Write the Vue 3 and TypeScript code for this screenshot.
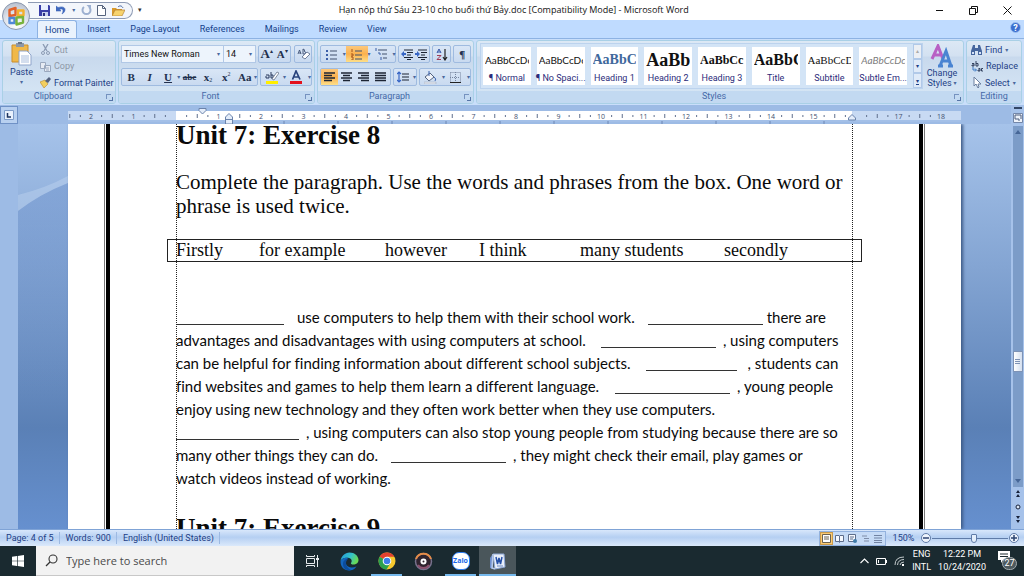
<script setup lang="ts">
import { ref } from 'vue'

interface Segment {
  text?: string
  blank?: number
  before?: number
}

interface StyleSample {
  label: string
  sample: string
  kind: string
}

const fontName = ref('Times New Roman')
const fontSize = ref('14')
const zoom = ref(50)
const search = ref('')

const tabs = ['Insert', 'Page Layout', 'References', 'Mailings', 'Review', 'View']

const styleSamples: StyleSample[] = [
  { label: '¶ Normal', sample: 'AaBbCcDc', kind: 'sans' },
  { label: '¶ No Spaci...', sample: 'AaBbCcDc', kind: 'sans' },
  { label: 'Heading 1', sample: 'AaBbCc', kind: 'h1' },
  { label: 'Heading 2', sample: 'AaBb', kind: 'h2' },
  { label: 'Heading 3', sample: 'AaBbCc', kind: 'h3' },
  { label: 'Title', sample: 'AaBbC', kind: 'title' },
  { label: 'Subtitle', sample: 'AaBbCcD', kind: 'sub' },
  { label: 'Subtle Em...', sample: 'AaBbCcDc', kind: 'subtle' },
]

const phrases = ['Firstly', 'for example', 'however', 'I think', 'many students', 'secondly']

const lines: Segment[][] = [
  [{ blank: 108 }, { text: 'use computers to help them with their school work.', before: 13 }, { blank: 115, before: 13 }, { text: 'there are', before: 4 }],
  [{ text: 'advantages and disadvantages with using computers at school.' }, { blank: 115, before: 15 }, { text: ', using computers', before: 7 }],
  [{ text: 'can be helpful for finding information about different school subjects.' }, { blank: 91, before: 15 }, { text: ', students can', before: 11 }],
  [{ text: 'find websites and games to help them learn a different language.' }, { blank: 115, before: 16 }, { text: ', young people', before: 7 }],
  [{ text: 'enjoy using new technology and they often work better when they use computers.' }],
  [{ blank: 123 }, { text: ', using computers can also stop young people from studying because there are so', before: 7 }],
  [{ text: 'many other things they can do.' }, { blank: 115, before: 13 }, { text: ', they might check their email, play games or', before: 7 }],
  [{ text: 'watch videos instead of working.' }],
]

const unit = 42.5
const origin = 108
const numbers = Array.from({ length: 21 }, (_, i) => i - 2)
  .filter((n) => n !== 0 && n !== 16)
  .map((n) => ({ x: origin + n * unit, label: Math.abs(n) }))
const quarters = Array.from({ length: 83 }, (_, i) => i - 10).filter((q) => q % 4 !== 0 && q < 76)
const tabStops = Array.from({ length: 11 }, (_, i) => origin + (i + 2) * 54)
</script>

<template>
  <div class="screen">
    <header class="titlebar">
      <div class="quick">
        <button class="ic" aria-label="Save"><svg width="11" height="11" viewBox="0 0 11 11"><path d="M0 0h10l1 1v10H0z" fill="#3b3fa8" /><path d="M2 0h7v5H2z" fill="#e8efff" /><path d="M3 7h6v4H3z" fill="#c7d0ef" /><path d="M4 8h2v3H4z" fill="#2b2f80" /></svg></button>
        <button class="ic" aria-label="Undo"><svg width="11" height="11" viewBox="0 0 11 11"><path d="M0 1v5h5L3.500 4.500C6 3 8.500 4.500 6 9c5-3 4-9-4-6.500z" fill="#3f68bd" stroke="#3f68bd" stroke-width=".6" /></svg></button>
        <span class="arr">▾</span>
        <button class="ic" aria-label="Repeat"><svg width="11" height="11" viewBox="0 0 11 11"><path d="M3 2a4 4 0 1 0 5 0" fill="none" stroke="#9db0d0" stroke-width="2" /><path d="M5.500 0H10v4.500z" fill="#9db0d0" /></svg></button>
        <button class="ic" aria-label="New"><svg width="9" height="11" viewBox="0 0 9 11"><path d="M.5.5h5l3 3v7h-8z" fill="#fff" stroke="#55637d" /><path d="M5.500.5v3h3" fill="none" stroke="#55637d" /></svg></button>
        <button class="ic" aria-label="Open"><svg width="13" height="11" viewBox="0 0 13 11"><path d="M0 3h4l1 1h5v6H0z" fill="#d99a2e" /><path d="M3 5h10l-3 6H0z" fill="#f7d36d" stroke="#a8742a" stroke-width=".6" /><path d="M6 2c2-2 4-1 5 1" fill="none" stroke="#4463a0" /></svg></button>
      </div>
      <span class="more">▾</span>
      <h1>Hạn nộp thứ Sáu 23-10 cho buổi thứ Bảy.doc [Compatibility Mode] - Microsoft Word</h1>
      <div class="winbtns">
        <button aria-label="Minimize"><svg width="9" height="9" viewBox="0 0 9 9"><path d="M1 4.500h7" stroke="#111" /></svg></button>
        <button aria-label="Restore"><svg width="9" height="9" viewBox="0 0 9 9"><path d="M.5 2.500h6v6h-6zM2.500 2.500v-2h6v6h-2" fill="none" stroke="#111" /></svg></button>
        <button aria-label="Close"><svg width="9" height="9" viewBox="0 0 9 9"><path d="M.5.5l8 8M8.500.5l-8 8" stroke="#111" /></svg></button>
      </div>
    </header>
    <button class="office" aria-label="Office Button">
      <svg width="30" height="30" viewBox="0 0 30 30">
        <defs><radialGradient id="orb" cx=".5" cy=".85" r=".9"><stop offset="0" stop-color="#fff" /><stop offset=".5" stop-color="#dfe4ec" /><stop offset="1" stop-color="#b4bccb" /></radialGradient></defs>
        <circle cx="15" cy="15" r="13.500" fill="url(#orb)" stroke="#8a97ae" />
        <g fill="none" stroke-width="2.400" stroke-linejoin="round"><path d="M8.500 9l6-2v7l-6 1z" stroke="#e2622a" /><path d="M17 9.500h5.500v5H17z" stroke="#f4b02c" /><path d="M8.500 17h5v5h-5z" stroke="#4f88d6" /><path d="M15.500 16.500l6.500-.5v5.500l-6.500 2z" stroke="#78b33c" /></g>
      </svg>
    </button>
    <nav class="tabs">
      <button class="tab active">Home</button>
      <button v-for="t in tabs" :key="t" class="tab">{{ t }}</button>
      <button class="help" aria-label="Help">?</button>
    </nav>

    <section class="ribbon">
      <div class="group clipboard">
        <div class="body">
          <button class="big paste">
            <svg width="22" height="24" viewBox="0 0 22 24"><path d="M1 3h16v17H1z" fill="#f0b849" stroke="#c98d2c" /><path d="M5 1h8v4H5z" fill="#8d98a8" /><path d="M7 0h4v2H7z" fill="#687386" /><path d="M8 9h8l4 4v10H8z" fill="#fff" stroke="#8fa5cb" /><path d="M10 14h8M10 16h8M10 18h8M10 20h8" stroke="#a9bedd" /></svg>
            <span>Paste</span><span class="arr">▾</span>
          </button>
          <div class="stack">
            <button class="item off"><svg width="11" height="11" viewBox="0 0 11 11"><path d="M3 0l4 7M8 0L4 7" stroke="#8b9bb3" stroke-width="1.300" /><circle cx="3" cy="9" r="1.500" fill="none" stroke="#8b9bb3" /><circle cx="8" cy="9" r="1.500" fill="none" stroke="#8b9bb3" /></svg>Cut</button>
            <button class="item off"><svg width="11" height="11" viewBox="0 0 11 11"><path d="M.5 1.500h5v6h-5zM4.500 4.500h6v6h-6z" fill="#e6ebf3" stroke="#9aa8be" /><path d="M6 7h3M6 9h3" stroke="#9aa8be" /></svg>Copy</button>
            <button class="item"><svg width="11" height="11" viewBox="0 0 11 11"><path d="M0 5l5-2 3 4-4 4z" fill="#f3cf5f" stroke="#b88a2e" stroke-width=".6" /><path d="M5 4l4-4 2 2-3 4z" fill="#53617e" /></svg>Format Painter</button>
          </div>
        </div>
        <footer>Clipboard<i class="launch"></i></footer>
      </div>

      <div class="group font">
        <div class="body rows">
          <div class="row">
            <label class="combo name"><select v-model="fontName" aria-label="Font"><option>Times New Roman</option></select><span class="arr">▾</span></label>
            <label class="combo size"><select v-model="fontSize" aria-label="Font Size"><option>14</option></select><span class="arr">▾</span></label>
            <div class="tb w33"><button class="serif big11"><b>A</b><sup>▴</sup></button><button class="serif"><b>A</b><sup>▾</sup></button></div>
            <div class="tb w18 push"><button aria-label="Clear Formatting"><svg width="13" height="12" viewBox="0 0 13 12"><path d="M1 6l1.500-4L4 6M2 5h2M6 1v5h2q2-2-1-3 2-1-1-2" fill="none" stroke="#3c4f73" stroke-width=".9" /><path d="M5 9l5-5 3 2-5 5z" fill="#fff" stroke="#6f7f9c" /></svg></button></div>
          </div>
          <div class="row">
            <div class="tb fill">
              <button class="serif"><b>B</b></button><button class="serif"><b><i>I</i></b></button><button class="serif"><b><u>U</u></b></button><span class="arr">▾</span>
              <button class="serif s9"><b><s>abe</s></b></button><button class="serif"><b>x</b><sub>2</sub></button><button class="serif"><b>x</b><sup>2</sup></button><button class="serif"><b>Aa</b></button><span class="arr">▾</span>
            </div>
            <div class="tb w52 push">
              <button aria-label="Text Highlight Color"><svg width="14" height="14" viewBox="0 0 14 14"><path d="M1 5h3v3H1V6M6 2v6h2V5H6" fill="none" stroke="#29395c" /><path d="M7 9l5-7 2 1-5 7z" fill="#fff" stroke="#56647e" stroke-width=".7" /><path d="M1 11h12v3H1z" fill="#ffee00" /></svg></button><span class="arr">▾</span>
              <button aria-label="Font Color"><svg width="13" height="14" viewBox="0 0 13 14"><path d="M2.500 9.500L6 1l4 8.500M4 7h4.500" fill="none" stroke="#29437c" stroke-width="1.700" /><path d="M0 11h12v3H0z" fill="#e3111c" /></svg></button><span class="arr">▾</span>
            </div>
          </div>
        </div>
        <footer>Font<i class="launch"></i></footer>
      </div>

      <div class="group para">
        <div class="body rows">
          <div class="row">
            <div class="tb w78">
              <button aria-label="Bullets"><svg width="12" height="11" viewBox="0 0 12 11"><path d="M0 1h2v2H0zM0 5h2v2H0zM0 9h2v2H0z" fill="#3b5ea8" /><path d="M4 2h7M4 6h7M4 10h7" stroke="#41506c" /></svg></button><span class="arr">▾</span>
              <button class="on" aria-label="Numbering"><svg width="12" height="11" viewBox="0 0 12 11"><path d="M1 0v3M0 5h2v2H0M0 8h2v3H0" fill="none" stroke="#a8541c" /><path d="M4 2h7M4 6h7M4 10h7" stroke="#41506c" /></svg></button><span class="arr">▾</span>
              <button aria-label="Multilevel List"><svg width="13" height="12" viewBox="0 0 13 12"><path d="M1 0v3M3 5h2v2M6 9v3" fill="none" stroke="#3b5ea8" /><path d="M3 2h9M7 6h5M8 10h4" stroke="#41506c" stroke-width="1.200" /></svg></button><span class="arr">▾</span>
            </div>
            <div class="tb w32">
              <button aria-label="Decrease Indent"><svg width="12" height="11" viewBox="0 0 12 11"><path d="M3 1h9M6 3.500h6M6 6h4M3 8.500h9M6 10.500h4" stroke="#1c2433" stroke-width="1.200" /><path d="M0 5l3-3v2h2v2H3v2z" fill="#3766c5" /></svg></button>
              <button aria-label="Increase Indent"><svg width="12" height="11" viewBox="0 0 12 11"><path d="M3 1h9M6 3.500h6M6 6h4M3 8.500h9M6 10.500h4" stroke="#1c2433" stroke-width="1.200" /><path d="M5 5L2 2v2H0v2h2v2z" fill="#3766c5" /></svg></button>
            </div>
            <div class="tb w20"><button aria-label="Sort"><svg width="12" height="13" viewBox="0 0 12 13"><path d="M1 5l2-4 2 4M1.500 4h3" fill="none" stroke="#3353a6" /><path d="M1 7.500h4l-4 4h4" fill="none" stroke="#a23a55" /><path d="M9 1v10M7 9l2 3 2-3" fill="none" stroke="#222" stroke-width="1.200" /></svg></button></div>
            <div class="tb w18"><button class="serif"><b>¶</b></button></div>
          </div>
          <div class="row">
            <div class="tb w71">
              <button class="on" aria-label="Align Left"><svg width="12" height="10" viewBox="0 0 12 10"><path d="M0 1h11M0 3.500h8M0 6h11M0 8.500h8" stroke="#1c2433" stroke-width="1.400" /></svg></button>
              <button aria-label="Center"><svg width="12" height="10" viewBox="0 0 12 10"><path d="M0 1h11M2 3.500h7M0 6h11M2 8.500h7" stroke="#1c2433" stroke-width="1.400" /></svg></button>
              <button aria-label="Align Right"><svg width="12" height="10" viewBox="0 0 12 10"><path d="M0 1h11M3 3.500h8M0 6h11M3 8.500h8" stroke="#1c2433" stroke-width="1.400" /></svg></button>
              <button aria-label="Justify"><svg width="12" height="10" viewBox="0 0 12 10"><path d="M0 1h11M0 3.500h11M0 6h11M0 8.500h11" stroke="#1c2433" stroke-width="1.400" /></svg></button>
            </div>
            <div class="tb w24"><button aria-label="Line Spacing"><svg width="12" height="12" viewBox="0 0 12 12"><path d="M2 1v10M0 3l2-2 2 2M0 9l2 2 2-2" fill="none" stroke="#3766c5" stroke-width="1.200" /><path d="M5 3h7M5 6h7M5 9h7" stroke="#1c2433" stroke-width="1.200" /></svg></button><span class="arr">▾</span></div>
            <div class="tb w52">
              <button aria-label="Shading"><svg width="13" height="13" viewBox="0 0 13 13"><path d="M1 6l5-4 4 4-5 4z" fill="#f2f5fb" stroke="#54647f" /><path d="M5 0v5M10 6q3 2 1 4" fill="none" stroke="#3d65b0" /><path d="M0 11h12v2H0z" fill="#e4e8ef" stroke="#9aa6bb" stroke-width=".5" /></svg></button><span class="arr">▾</span>
              <button aria-label="Borders"><svg width="11" height="11" viewBox="0 0 11 11"><path d="M.5.5h10v10M.5.5v10M5.500 0v10M0 5.500h10" fill="none" stroke="#76859f" stroke-dasharray="1 1" /><path d="M0 10.500h11" stroke="#222" /></svg></button><span class="arr">▾</span>
            </div>
          </div>
        </div>
        <footer>Paragraph<i class="launch"></i></footer>
      </div>

      <div class="group styles">
        <div class="body">
          <div class="gallery">
            <button v-for="s in styleSamples" :key="s.label" class="sample">
              <span class="pv" :class="s.kind">{{ s.sample }}</span>
              <span class="lb">{{ s.label }}</span>
            </button>
            <div class="gscroll"><button class="dim" aria-label="Up">▴</button><button aria-label="Down">▾</button><button aria-label="More"><u>▾</u></button></div>
          </div>
          <button class="big change">
            <svg width="24" height="24" viewBox="0 0 24 24"><path d="M2 15L8 2l5 13M4 11h7" fill="none" stroke="#b860c4" stroke-width="3" /><path d="M10 22l6-15 5 15M12 17h8M8 22h5M18 22h5" fill="none" stroke="#4a84d2" stroke-width="3" /></svg>
            <span>Change</span><span class="with-arrow">Styles <i class="arr">▾</i></span>
          </button>
        </div>
        <footer>Styles<i class="launch"></i></footer>
      </div>

      <div class="group editing">
        <div class="body">
          <div class="stack">
            <button class="item"><svg width="11" height="10" viewBox="0 0 11 10"><path d="M2 0h2v3h3V0h2l2 6v4H7V6H4v4H0V6z" fill="#46669e" /><path d="M1 7h2v2H1zM8 7h2v2H8z" fill="#d5e3f8" /></svg>Find <span class="arr">▾</span></button>
            <button class="item"><svg width="12" height="11" viewBox="0 0 12 11"><path d="M1 2.500h2V5H1V4h2M5 0v5h2V2.500H5M7.500 7.500h1.500V10H7V9h2M12 7.500h-1.500V10H12" fill="none" stroke="#33415e" /><path d="M2 6v3h3M4 7.500L5.500 9 4 10.500" fill="none" stroke="#3b78c2" /></svg>Replace</button>
            <button class="item"><svg width="11" height="11" viewBox="0 0 11 11"><path d="M3 0v9l2-2 2 4 1-1-1-3h3z" fill="#fff" stroke="#6a7f9f" /></svg>Select <span class="arr">▾</span></button>
          </div>
        </div>
        <footer>Editing</footer>
      </div>
    </section>

    <div class="work">
      <div class="left">
        <button class="tabsel" aria-label="Tab selector"><svg width="10" height="10" viewBox="0 0 10 10"><path d="M.5.5h9v9h-9z" fill="#e9f1fd" stroke="#7d9cc9" /><path d="M3.500 3v4H7" fill="none" stroke="#1d3460" stroke-width="1.500" /></svg></button>
      </div>
      <div class="center">
        <div class="rulerrow">
          <svg class="ruler" width="893" height="20" viewBox="0 0 893 20">
            <path d="M0 6h893v9H0z" fill="#c8daf3" />
            <path d="M108 6h676v9H108z" fill="#fff" />
            <path d="M0 16h893" stroke="#a9c4ea" />
            <text v-for="n in numbers" :key="n.x" :x="n.x" y="14" text-anchor="middle">{{ n.label }}</text>
            <template v-for="q in quarters" :key="q">
              <path :d="q % 2 === 0 ? `M${origin + (q * unit) / 4} 9v4` : `M${origin + (q * unit) / 4} 10v2`" stroke="#5f6f8c" />
            </template>
            <path v-for="t in tabStops" :key="t" :d="`M${t} 16v3`" stroke="#6c86b3" />
            <path d="M131 3.500h7v2l-3.500 3.500L131 5.500z" fill="#e4edfa" stroke="#6b83ab" />
            <path d="M157.500 19v-7l3.500-3.500 3.500 3.500v7zM157.500 14.500h7" fill="#e4edfa" stroke="#6b83ab" />
            <path d="M780.500 15v-2l3.500-3.500 3.500 3.500v2z" fill="#e4edfa" stroke="#6b83ab" />
          </svg>
        </div>
        <main class="desk">
          <svg class="swoosh" width="50" height="240" viewBox="0 0 50 240">
            <defs><linearGradient id="fade" x1="0" x2="0" y1="0" y2="1"><stop offset="0" stop-color="#5f86c6" stop-opacity=".35" /><stop offset="1" stop-color="#5f86c6" stop-opacity="0" /></linearGradient></defs>
            <path d="M0 21Q28 14 50 2V9Q22 20 0 37z" fill="#d3e3f7" opacity=".3" />
            <path d="M0 37Q22 20 50 9V240H0z" fill="url(#fade)" />
          </svg>
          <article class="page">
            <div class="frame">
              <div class="text">
                <h2>Unit 7: Exercise 8</h2>
                <p class="intro">Complete the paragraph. Use the words and phrases from the box. One word or phrase is used twice.</p>
                <ul class="box"><li v-for="p in phrases" :key="p">{{ p }}</li></ul>
                <div class="cloze">
                  <p v-for="(line, i) in lines" :key="i">
                    <span v-for="(seg, j) in line" :key="j" :class="{ blank: seg.blank }" :style="{ width: seg.blank ? seg.blank + 'px' : undefined, marginLeft: (seg.before ?? 0) + 'px' }">{{ seg.text }}</span>
                  </p>
                </div>
                <h2 class="next">Unit 7: Exercise 9</h2>
              </div>
            </div>
          </article>
        </main>
      </div>
      <aside class="scroll">
        <i class="split"></i>
        <button class="rt" aria-label="View Ruler"><svg width="10" height="10" viewBox="0 0 10 10"><path d="M.5.5h9v9h-9z" fill="#eef3fb" stroke="#7386a8" /><path d="M2 2h6v4M2 2v4h4v2" fill="none" stroke="#4c5c7c" /></svg></button>
        <div class="track">
          <button aria-label="Scroll up"><svg width="6" height="4" viewBox="0 0 6 4"><path d="M3 0l3 4H0z" fill="#466697" /></svg></button>
          <i class="thumb"></i>
          <button aria-label="Scroll down"><svg width="6" height="4" viewBox="0 0 6 4"><path d="M0 0h6L3 4z" fill="#466697" /></svg></button>
        </div>
        <button class="nav" aria-label="Previous Page"><svg width="6" height="8" viewBox="0 0 6 8"><path d="M3 0l2 3H1zM3 4l2 3H1z" fill="#16213a" /></svg></button>
        <button class="nav" aria-label="Browse Object"><svg width="6" height="6" viewBox="0 0 6 6"><circle cx="3" cy="3" r="2" fill="#dbe6f6" stroke="#16213a" /></svg></button>
        <button class="nav" aria-label="Next Page"><svg width="6" height="8" viewBox="0 0 6 8"><path d="M1 0h4L3 3zM1 4h4L3 7z" fill="#16213a" /></svg></button>
      </aside>
    </div>

    <div class="status">
      <span>Page: 4 of 5</span><span>Words: 900</span><span>English (United States)</span>
      <div class="views">
        <button class="on" aria-label="Print Layout"><svg width="9" height="9" viewBox="0 0 9 9"><path d="M.5.5h8v8h-8zM2 3h5M2 5h5" fill="#fff" stroke="#6b6250" /></svg></button>
        <button aria-label="Full Screen Reading"><svg width="9" height="9" viewBox="0 0 9 9"><path d="M.5 1.500h3.500l.5 1 .5-1h3.500v6H5l-.5 1-.5-1H.5zM4.500 2v6" fill="#f6f9fe" stroke="#5d6d8b" /></svg></button>
        <button aria-label="Web Layout"><svg width="9" height="9" viewBox="0 0 9 9"><path d="M.5.5h7v7h-7zM2 3h4M2 5h3" fill="#f6f9fe" stroke="#5d6d8b" /><circle cx="7" cy="7" r="2" fill="#3f7aa8" /></svg></button>
        <button aria-label="Outline"><svg width="9" height="9" viewBox="0 0 9 9"><path d="M1 2h5M3 4.500h5M3 7h5" stroke="#7e8da8" /></svg></button>
        <button aria-label="Draft"><svg width="9" height="9" viewBox="0 0 9 9"><path d="M0 1.500h8M0 4h8M0 6.500h8M0 8.500h8" stroke="#7183a3" /></svg></button>
      </div>
      <button class="pct">150%</button>
      <button class="round" aria-label="Zoom Out"><svg width="8" height="8" viewBox="0 0 8 8"><path d="M1 4h6" stroke="#2c4370" stroke-width="1.500" /></svg></button>
      <input v-model="zoom" type="range" min="0" max="90" aria-label="Zoom" />
      <button class="round" aria-label="Zoom In"><svg width="8" height="8" viewBox="0 0 8 8"><path d="M1 4h6M4 1v6" stroke="#2c4370" stroke-width="1.500" /></svg></button>
    </div>

    <footer class="taskbar">
      <button class="start" aria-label="Start"><svg width="12" height="12" viewBox="0 0 12 12"><path d="M0 1.700l5-.7v4.700H0zM5.700.9L12 0v5.700H5.700zM0 6.300h5V11l-5-.7zM5.700 6.300H12V12l-6.300-.9z" fill="#fff" /></svg></button>
      <label class="find"><svg width="13" height="13" viewBox="0 0 13 13"><circle cx="8" cy="5" r="4" fill="none" stroke="#333" stroke-width="1.100" /><path d="M5 8l-4 4" stroke="#333" stroke-width="1.200" /></svg><input v-model="search" type="text" placeholder="Type here to search" aria-label="Search" /></label>
      <button class="app" aria-label="Task View"><svg width="13" height="12" viewBox="0 0 13 12"><path d="M.5 0v1.500h8V0M.5 3.500h8v5h-8zM.5 12v-1.500h8V12M11.500 0v12" fill="none" stroke="#e8ecee" /><path d="M10 3h3v2h-3z" fill="#e8ecee" /></svg></button>
      <button class="app" aria-label="Edge">
        <svg width="19" height="19" viewBox="0 0 19 19"><defs><linearGradient id="eg" x1="0" x2="1" y1="0" y2=".4"><stop offset="0" stop-color="#2295dc" /><stop offset=".6" stop-color="#35c3c8" /><stop offset="1" stop-color="#68d957" /></linearGradient></defs><path d="M0.500 9.500C1 4 5 .5 9.500.5c5 0 9 3.500 9 7.500 0 3-2.500 4.500-5 4.500-2 0-3-.7-2.500-1.500 1.500-2 .5-4.500-2-5C5 5.300 1 7 .5 9.500z" fill="url(#eg)" /><path d="M.5 9.500C1 7 5 5.300 8.500 6c-2.500 1-3.500 3.500-2.500 6 1.200 3 5 4.500 10.500 2.500-2 3-5 4-7.500 4C4 18.500.3 14.500.5 9.500z" fill="#1466bd" /><path d="M8 7c-3 2-3 8 3 11-5 1-8-2-8-6 0-3 2-5 5-5z" fill="#0c4c9c" /></svg>
      </button>
      <button class="app open" aria-label="Chrome">
        <svg width="18" height="18" viewBox="0 0 18 18"><circle cx="9" cy="9" r="8.500" fill="#f7c92e" /><path d="M9 9L1.600 4.800A8.500 8.500 0 0 1 16.400 4.800H9z" fill="#e2402f" /><path d="M9 9L1.600 4.800A8.500 8.500 0 0 0 8.500 17.500L12.500 11z" fill="#2ca14e" /><circle cx="9" cy="9" r="4.300" fill="#fff" /><circle cx="9" cy="9" r="3.300" fill="#3d7ee8" /></svg>
      </button>
      <button class="app" aria-label="Music">
        <svg width="19" height="19" viewBox="0 0 19 19"><circle cx="9.500" cy="9.500" r="8" fill="#30242f" stroke="#77718c" stroke-width="1.500" /><path d="M2 7A8 8 0 0 1 17 7" fill="none" stroke="#e58c48" stroke-width="2" /><path d="M4 13A6.500 6.500 0 0 0 15 13" fill="none" stroke="#8d5270" stroke-width="2" /><circle cx="9.500" cy="9.500" r="3" fill="#fff" /><circle cx="9.500" cy="9.500" r="1" fill="#30242f" /></svg>
      </button>
      <button class="app open" aria-label="Zalo"><span class="zalo">Zalo</span></button>
      <button class="app open current" aria-label="Word">
        <svg width="17" height="17" viewBox="0 0 17 17"><path d="M4 1h11l1 13-10 2z" fill="#e9effa" stroke="#8ea8d6" /><path d="M3 2L1 5v10l3 1z" fill="#6f8fce" /><path d="M4 1L3 15l3 1" fill="none" stroke="#b9cbea" stroke-width="1.500" /><path d="M7 4l1.500 7L10 5l1.500 6L13 4" fill="none" stroke="#2550a8" stroke-width="1.500" /><path d="M8 13h6" stroke="#6785c0" /></svg>
      </button>
      <div class="tray">
        <svg width="9" height="6" viewBox="0 0 9 6"><path d="M.5 5l4-4 4 4" fill="none" stroke="#fff" stroke-width="1.100" /></svg>
        <svg width="11" height="7" viewBox="0 0 11 7"><path d="M.5.5h9v6h-9z" fill="none" stroke="#fff" /><path d="M2 2h1v3H2zM10 2h1v3h-1z" fill="#fff" /></svg>
        <svg width="11" height="10" viewBox="0 0 11 10"><path d="M1 9Q1 1 10 1M3.500 9Q4 3.500 10 3.500M6 9Q6.500 6 10 6" fill="none" stroke="#c3cacc" /><path d="M8 8h2v2H8z" fill="#fff" /></svg>
        <div class="two"><span>ENG</span><span>INTL</span></div>
        <div class="two clock"><span>12:22 PM</span><span>10/24/2020</span></div>
        <button class="note" aria-label="Notifications"><svg width="12" height="13" viewBox="0 0 12 13"><path d="M0 0h12v9H5l-2 3V9H0z" fill="#fff" /><path d="M2 3h8M2 5.500h8" stroke="#1b2a30" /></svg><span>27</span></button>
      </div>
    </footer>
  </div>
</template>

<style>
html,
body {
  margin: 0;
  overflow: hidden;
}
</style>

<style scoped>
* {
  box-sizing: border-box;
}
.screen {
  height: 100vh;
  display: flex;
  flex-direction: column;
  position: relative;
  overflow: hidden;
  font: 9px/12px Roboto, 'Open Sans', sans-serif;
  color: #1e3f86;
}
button,
input,
select {
  font: inherit;
  color: inherit;
  background: none;
  border: 0;
  padding: 0;
  margin: 0;
  white-space: nowrap;
}
button {
  display: flex;
  align-items: center;
  justify-content: center;
}
svg {
  flex: none;
  display: block;
}
h1,
h2,
p,
ul {
  margin: 0;
  padding: 0;
  font-weight: normal;
}
.arr {
  font: 6px/8px 'DejaVu Sans', sans-serif;
  color: #4b689c;
}
.titlebar {
  height: 20px;
  flex: none;
  background: #fff;
  display: flex;
  align-items: center;
  padding-left: 28px;
}
.quick {
  width: 105px;
  height: 17px;
  border: 1px solid #8e9bb4;
  border-left: 0;
  border-radius: 0 9px 9px 0;
  background: #f3f6fb;
  display: flex;
  align-items: center;
  justify-content: space-between;
  padding: 0 7px 0 11px;
}
.more {
  margin-left: 5px;
  font: 7px/9px 'DejaVu Sans', sans-serif;
  color: #333;
}
h1 {
  flex: 1;
  text-align: center;
  font: 9px/20px 'Open Sans', 'Noto Sans', sans-serif;
  color: #111;
  padding-right: 36px;
  white-space: nowrap;
}
.winbtns {
  display: flex;
  width: 102px;
}
.winbtns button {
  flex: 1;
}
.office {
  position: absolute;
  left: 1px;
  top: 1px;
}
.tabs {
  height: 18px;
  flex: none;
  background: #bfdbff;
  display: flex;
  align-items: stretch;
  padding: 0 3px 0 37px;
}
.tab {
  padding: 0 10px;
  color: #15428b;
}
.tab.active {
  background: #e9f2fd;
  border: 1px solid #8db2e3;
  border-bottom: 0;
  border-radius: 3px 3px 0 0;
  padding: 0 7px;
}
.help {
  margin: 2px 0 0 auto;
  width: 11px;
  height: 11px;
  border-radius: 50%;
  background: #3b6fd0;
  border: 1px solid #9fc0ef;
  color: #fff;
  font-weight: bold;
}
.ribbon {
  height: 67px;
  flex: none;
  display: flex;
  gap: 2px;
  padding: 1px 2px;
  background: #c9defa;
  border-top: 1px solid #8db2e3;
}
.group {
  border: 1px solid #a9d0e6;
  border-radius: 3px;
  background: linear-gradient(#dce8f5 0, #d3e1f1 15px, #c8d9ed 16px, #d8e8f6 100%);
  display: flex;
  flex-direction: column;
  min-width: 0;
  overflow: hidden;
  flex: none;
}
.group .body {
  flex: 1;
  display: flex;
  min-height: 0;
}
.group footer {
  height: 12px;
  line-height: 11px;
  background: #c2d9f1;
  text-align: center;
  color: #4569a8;
  position: relative;
  padding-right: 12px;
}
.group.editing footer {
  padding-right: 0;
}
.launch {
  position: absolute;
  right: 4px;
  top: 3px;
  width: 5px;
  height: 5px;
  border-left: 1px solid #7592bf;
  border-top: 1px solid #7592bf;
}
.launch::after {
  content: '';
  position: absolute;
  left: 2px;
  top: 2px;
  width: 3px;
  height: 3px;
  border-right: 1px solid #5675a8;
  border-bottom: 1px solid #5675a8;
}
.clipboard {
  width: 114px;
}
.font {
  width: 197px;
}
.para {
  width: 157px;
}
.group.styles {
  flex: 1;
}
.editing {
  width: 56px;
}
.big {
  flex-direction: column;
  line-height: 10px;
}
.paste {
  width: 37px;
  justify-content: flex-start;
  padding-top: 1px;
}
.paste span {
  margin-top: 1px;
}
.stack {
  display: flex;
  flex-direction: column;
  justify-content: space-evenly;
  align-items: flex-start;
}
.stack .item {
  height: 16px;
  gap: 3px;
}
.off {
  color: #8d97a6;
}
.rows {
  flex-direction: column;
  padding: 4px 2px 0;
  gap: 5px;
}
.row {
  display: flex;
  gap: 2px;
  height: 18px;
}
.combo {
  display: flex;
  align-items: center;
  background: #edf4fc;
  border: 1px solid #b1c8e6;
  color: #111;
  padding: 0 3px 0 2px;
  justify-content: space-between;
}
.combo select {
  appearance: none;
  flex: 1;
  min-width: 0;
}
.name {
  width: 103px;
}
.size {
  width: 33px;
  margin-left: -3px;
}
.tb {
  display: flex;
  align-items: center;
  border: 1px solid #9fbbe0;
  border-radius: 2px;
  background: linear-gradient(#d9e6f6, #c9daf0);
}
.tb button {
  flex: 1;
  height: 100%;
  color: #22304d;
}
.tb .on {
  background: linear-gradient(#fcc87c, #fbb14d 50%, #fddf8a);
}
.push {
  margin-left: auto;
}
.w18 {
  width: 18px;
}
.w20 {
  width: 20px;
}
.w24 {
  width: 24px;
}
.w32 {
  width: 32px;
}
.w33 {
  width: 33px;
}
.w52 {
  width: 52px;
}
.w71 {
  width: 71px;
}
.w78 {
  width: 78px;
}
.fill {
  width: 137px;
}
.serif {
  font: 11px/14px 'Liberation Serif', serif;
}
.serif.s9 {
  font-size: 9px;
}
.serif sup,
.serif sub {
  font-size: 6px;
  line-height: 6px;
}
.serif sup {
  align-self: flex-start;
  margin-top: 2px;
}
.serif sub {
  align-self: flex-end;
  margin-bottom: 2px;
}
.big11 {
  font-size: 13px;
}
.styles .body {
  padding: 2px 2px 2px 3px;
}
.gallery {
  flex: 1;
  min-width: 0;
  display: flex;
  gap: 6px;
  padding: 3px 0 3px 2px;
  background: #d3e4f6;
  border: 1px solid #bcd3ee;
}
.sample {
  flex: 1;
  min-width: 0;
  background: #fff;
  flex-direction: column;
  justify-content: flex-end;
  padding: 0 2px;
}
.pv {
  width: 100%;
  height: 22px;
  line-height: 22px;
  overflow: hidden;
  text-align: left;
  color: #111;
}
.lb {
  line-height: 14px;
  color: #2b2b7a;
}
.sans {
  font: 10px/22px Lato, sans-serif;
}
.h1,
.h2,
.h3,
.title,
.sub {
  font-family: 'Liberation Serif', serif;
}
.h1 {
  font-size: 14px;
  font-weight: bold;
  color: #3f689c;
}
.h2 {
  font-size: 18px;
  font-weight: bold;
}
.h3 {
  font-size: 12px;
  font-weight: bold;
}
.title {
  font-size: 16px;
  font-weight: bold;
}
.sub {
  font-size: 11px;
}
.subtle {
  font: italic 10px/22px Lato, sans-serif;
  color: #7d7d7d;
}
.gscroll {
  width: 9px;
  margin: -3px 0;
  display: flex;
  flex-direction: column;
}
.gscroll button {
  flex: 1;
  font-size: 6px;
  line-height: 8px;
  border: 1px solid #b1c9e8;
  background: #dfeaf8;
}
.gscroll .dim {
  color: #aaa;
  background: #eceff4;
}
.change {
  width: 38px;
}
.with-arrow {
  display: flex;
  align-items: center;
  gap: 2px;
}
.with-arrow .arr {
  font-style: normal;
}
.editing .stack {
  padding-left: 4px;
}
.work {
  flex: 1;
  min-height: 0;
  display: flex;
  background: #9dbbe5;
}
.left {
  width: 18px;
  flex: none;
}
.tabsel {
  width: 18px;
  height: 18px;
  margin-top: 1px;
  border: 1px solid #6f91c6;
  background: #b8d0f0;
}
.center {
  flex: 1;
  min-width: 0;
  display: flex;
  flex-direction: column;
}
.rulerrow {
  height: 19px;
  flex: none;
  display: flex;
  justify-content: center;
  overflow: hidden;
}
.ruler text {
  font: 7px 'Open Sans', sans-serif;
  fill: #41506f;
}
.desk {
  flex: 1;
  min-height: 0;
  overflow: hidden;
  position: relative;
  display: flex;
  justify-content: center;
  background: linear-gradient(#a6c3ea, #84a5d3 35%, #5a80b6 75%, #6690cf 100%);
}
.swoosh {
  position: absolute;
  left: 0;
  top: 50px;
}
.page {
  width: 893px;
  max-width: 100%;
  background: #fff;
  position: relative;
  box-shadow: 2px 0 3px #3d5a86;
  padding: 0 36px;
}
.frame {
  height: 100%;
  border: solid #777;
  border-width: 0 1px;
  padding: 0 1px;
}
.text {
  display: flow-root;
  height: 100%;
  border: solid #000;
  border-width: 0 4px;
  padding: 0 66px;
  position: relative;
  color: #0a0a0a;
}
.text::before {
  content: '';
  position: absolute;
  left: 66px;
  right: 66px;
  top: 0;
  bottom: 0;
  border: dotted #222;
  border-width: 0 1px;
}
h2 {
  font: bold 27px/30px 'Liberation Serif', serif;
  margin-top: -4px;
}
.intro {
  font: 21px/24px 'Liberation Serif', serif;
  margin-top: 20px;
}
.box {
  list-style: none;
  margin: 21px -9px 0;
  border: 1px solid #222;
  padding: 0 8px;
  font: 18px/21px 'Liberation Serif', serif;
  display: grid;
  grid-template-columns: 83px 126px 94px 101px 144px auto;
  white-space: nowrap;
}
.cloze {
  margin-top: 44px;
  font: 15px/23px Lato, sans-serif;
  font-variant-ligatures: none;
}
.cloze p {
  display: flex;
  white-space: nowrap;
}
.blank {
  flex: none;
  height: 19px;
  border-bottom: 1px solid #333;
}
.next {
  margin-top: 23px;
}
.scroll {
  width: 13px;
  flex: none;
  display: flex;
  flex-direction: column;
  align-items: center;
  background: #a6c2ea;
  padding-bottom: 3px;
}
.split {
  width: 8px;
  height: 2px;
  background: #324666;
  margin: 2px 0 3px;
}
.rt {
  height: 11px;
}
.track {
  width: 10px;
  margin-top: 3px;
  flex: 1;
  display: flex;
  flex-direction: column;
  background: #7c9cc8;
}
.track button {
  height: 12px;
}
.thumb {
  margin-top: 213px;
  margin-bottom: auto;
  height: 21px;
  border: 1px solid #7d92b5;
  border-radius: 1px;
  background: linear-gradient(#7d92b5 1px, transparent 1px 2px, #7d92b5 2px 3px, transparent 3px 4px, #7d92b5 4px) center / 5px 5px no-repeat, linear-gradient(90deg, #fff, #d4dfef);
}
.nav {
  height: 13px;
}
.status {
  height: 17px;
  flex: none;
  display: flex;
  align-items: center;
  border-top: 1px solid #7fa3d6;
  background: linear-gradient(#d8e7fb, #b5cff2 45%, #dbe9fb);
  padding: 0 5px 0 0;
}
.status > span {
  padding: 0 5px 0 6px;
  border-right: 1px solid #9cb9e2;
}
.views {
  margin-left: auto;
  display: flex;
  border: 1px solid #93b2de;
  background: #c6dbf6;
}
.views button {
  width: 13px;
  height: 13px;
}
.views .on {
  background: #fbcb73;
  border: 1px solid #c99a4b;
}
.pct {
  width: 35px;
}
.round {
  width: 10px;
  height: 10px;
  border: 1px solid #5f7ba8;
  border-radius: 50%;
  background: #eef4fd;
}
.status input {
  appearance: none;
  width: 76px;
  height: 10px;
  margin: 0 1px;
  background: linear-gradient(#5f7ba8, #5f7ba8) center / 100% 1px no-repeat;
}
.status input::-webkit-slider-thumb {
  appearance: none;
  width: 6px;
  height: 9px;
  background: #e4eefb;
  border: 1px solid #5f7ba8;
  border-radius: 1px 1px 3px 3px;
}
.taskbar {
  height: 30px;
  flex: none;
  background: #1a2a30;
  display: flex;
  align-items: stretch;
  color: #fff;
}
.start {
  width: 36px;
}
.find {
  width: 258px;
  background: #f2f2f2;
  display: flex;
  align-items: center;
  gap: 8px;
  padding-left: 9px;
  border-bottom: 1px solid #c8c8c8;
}
.find input {
  flex: 1;
  min-width: 0;
  font: 11px/14px 'Open Sans', sans-serif;
  color: #333;
  outline: 0;
}
.find input::placeholder {
  color: #4a4a4a;
  opacity: 1;
}
.app {
  width: 37px;
  position: relative;
}
.app.open::after {
  content: '';
  position: absolute;
  left: 3px;
  right: 3px;
  bottom: 0;
  height: 2px;
  background: #76b9ed;
}
.app.current {
  background: #4a565b;
}
.app.current::after {
  left: 0;
  right: 0;
}
.zalo {
  width: 18px;
  height: 18px;
  border-radius: 7px;
  background: #fff;
  border: 1px solid #2a7cf0;
  color: #1868e8;
  font: bold 7px/16px 'Open Sans', sans-serif;
}
.tray {
  margin-left: auto;
  display: flex;
  align-items: center;
  gap: 7px;
  padding-right: 5px;
}
.two {
  display: flex;
  flex-direction: column;
  align-items: center;
  line-height: 13px;
}
.clock {
  margin-right: 5px;
}
.note {
  position: relative;
  width: 21px;
  height: 20px;
  align-items: flex-start;
  justify-content: flex-start;
}
.note span {
  position: absolute;
  left: 4px;
  top: 6px;
  width: 15px;
  height: 13px;
  border-radius: 7px;
  background: #4e5a5f;
  border: 1px solid #a3abae;
  line-height: 11px;
}
</style>
